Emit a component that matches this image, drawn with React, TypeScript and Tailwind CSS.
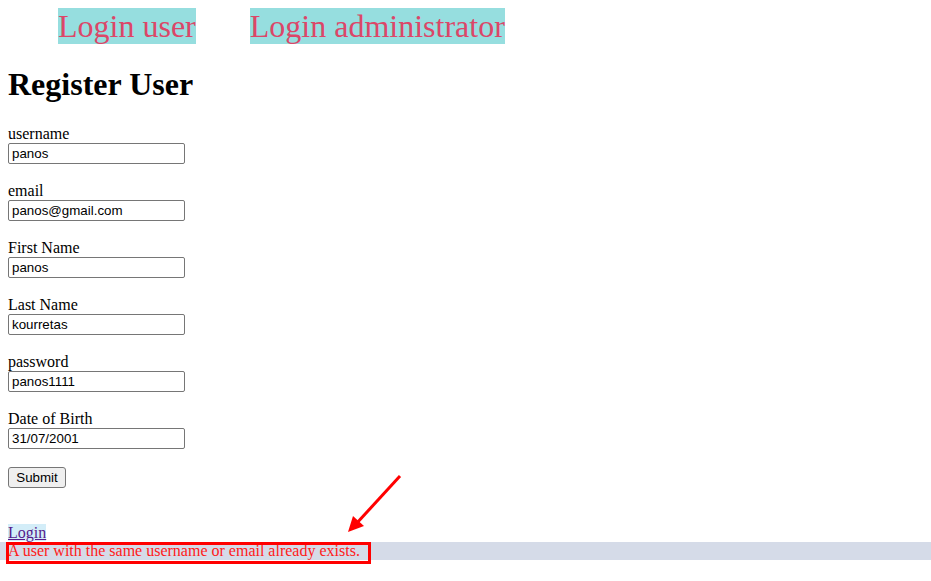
import React from "react";

const fields = [
  { label: "username", value: "panos" },
  { label: "email", value: "panos@gmail.com" },
  { label: "First Name", value: "panos" },
  { label: "Last Name", value: "kourretas" },
  { label: "password", value: "panos1111" },
  { label: "Date of Birth", value: "31/07/2001" },
];

export default function App() {
  return (
    <div className="relative min-h-[581px] bg-white pt-2 font-['Liberation_Serif',serif] text-black">
      {/* top nav */}
      <nav className="flex h-9 items-start gap-[54px] pl-[58px]">
        <a className="bg-[#96dedf] text-[32px] leading-9 text-[#dc4668]">Login user</a>
        <a className="bg-[#96dedf] text-[32px] leading-9 text-[#dc4668]">Login administrator</a>
      </nav>

      <h1 className="mt-[22px] px-2 text-[32px] font-bold leading-[37px]">Register User</h1>

      <form className="mt-[22px] flex flex-col items-start px-2">
        {fields.map((f) => (
          <div key={f.label} className="mb-[18px] flex flex-col items-start">
            <label className="text-base leading-[18px]">{f.label}</label>
            <input
              readOnly
              defaultValue={f.value}
              className="h-[21px] w-[177px] rounded-[2px] border border-[#767676] px-[3px] font-['Liberation_Sans',sans-serif] text-[13.33px] outline-none"
            />
          </div>
        ))}
        <button
          type="button"
          className="h-[21px] w-[58px] rounded-[3px] border border-[#767676] bg-[#efefef] font-['Liberation_Sans',sans-serif] text-[13.33px] leading-none"
        >
          Submit
        </button>
      </form>

      <div className="mt-9 h-[18px] px-2 text-base leading-[18px]">
        <a className="bg-[#d3edf8] text-[#551a8b] underline">Login</a>
      </div>
      <div className="h-[18px] bg-[#d5dbe8] px-2 text-base leading-[18px] text-[#ff1a1a]">
        A user with the same username or email already exists.
      </div>

      {/* annotation box + arrow */}
      <div className="absolute left-[6px] top-[542px] h-[22px] w-[365px] border-[3px] border-[#ff0000]" />
      <svg className="absolute left-[340px] top-[470px]" width="70" height="70" viewBox="0 0 70 70">
        <line x1="60" y1="6" x2="16" y2="54" stroke="#ff0000" strokeWidth="3" />
        <polygon points="8,62 13,46 24,56" fill="#ff0000" />
      </svg>
    </div>
  );
}
